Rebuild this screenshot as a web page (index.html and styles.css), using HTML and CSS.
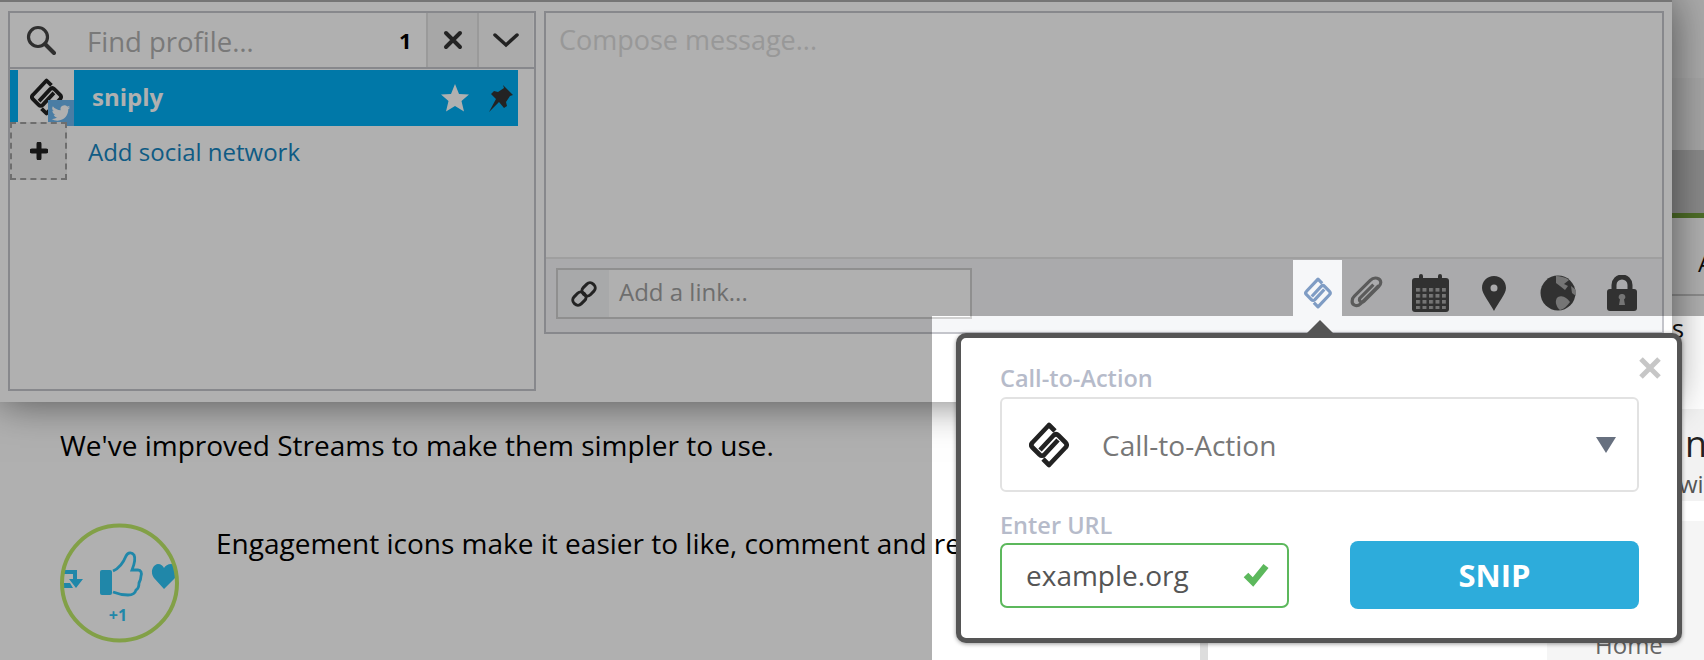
FILE: index.html
```html
<!DOCTYPE html>
<html lang="en">
<head>
    <meta charset="UTF-8">
    <meta name="viewport" content="width=device-width, initial-scale=1.0">
    <title>Compose</title>
    <link rel="stylesheet" href="styles.css">
</head>
<body>
    <svg class="defs" width="0" height="0">
        <symbol id="sniply-logo" viewBox="0 0 40 46">
            <g fill="none" stroke="currentColor" stroke-width="4.600" stroke-linejoin="round">
                <path d="M26 9 L20 3 L3.500 20.500 Q1 23 3.500 25.500 L10.500 32.500 Q13 35 15.500 32.500 L29 18"/>
                <path d="M14 37 L20 43 L36.500 25.500 Q39 23 36.500 20.500 L29.500 13.500 Q27 11 24.500 13.500 L11 28"/>
            </g>
        </symbol>
    </svg>

    <!-- page behind the composer -->
    <div class="page">
        <div class="header">
            <div class="header-top"></div>
            <div class="header-band"></div>
            <div class="header-tabs"><span>A</span></div>
        </div>
        <div class="content">
            <div class="main">
                <p class="intro">We've improved Streams to make them simpler to use.</p>
                <div class="feature">
                    <svg class="feature-icon" width="120" height="120" viewBox="0 0 120 120">
                        <defs><clipPath id="ring"><circle cx="59.5" cy="60" r="57"/></clipPath></defs>
                        <g clip-path="url(#ring)" fill="#2fc4f5">
                            <path d="M2 47 H17 V56 H23 L16 65 L9 56 H13 V51 H2 Z"/>
                            <path d="M2 60 H10 L13 65 H2 Z"/>
                            <path d="M104 66 L94 55 C90 50 92 42 98 41 C101 41 103 43 104 45 C105 43 108 41 111 41 C117 42 119 50 115 55 Z"/>
                        </g>
                        <rect x="40" y="47" width="12" height="25" rx="2" fill="#2fc4f5"/>
                        <path d="M53 48 C60 45 64 38 66 33 C68 29 72 29 74 32 C76 36 74 42 72 47 L78 47 C81 47 82 50 81 53 C81 56 80 58 79 60 C79 63 78 66 76 67 C75 71 72 72 68 72 C62 72 58 71 53 69" fill="none" stroke="#2fc4f5" stroke-width="2.8"/>
                        <text class="feature-count" x="58" y="98" text-anchor="middle">+1</text>
                        <circle cx="59.5" cy="60" r="57.5" fill="none" stroke="#bde868" stroke-width="4"/>
                    </svg>
                    <p class="feature-text">Engagement icons make it easier to like, comment and re</p>
                </div>
            </div>
            <div class="divider"></div>
            <div class="side">
                <div class="side-note">os</div>
                <div class="side-card">
                    <div class="side-title">n</div>
                    <div class="side-sub">wi</div>
                </div>
                <div class="side-links"><span>Home</span></div>
            </div>
        </div>
    </div>

    <!-- composer dropdown -->
    <div class="panel">
        <div class="profiles">
            <div class="search">
                <svg class="search-icon" width="30" height="30" viewBox="0 0 30 30">
                    <circle cx="12" cy="12" r="9.5" fill="none" stroke="#444" stroke-width="3.2"/>
                    <path d="M19 19 L28 28" stroke="#444" stroke-width="4" stroke-linecap="round"/>
                </svg>
                <span class="search-text">Find profile…</span>
                <span class="search-count">1</span>
                <div class="search-btn clear">
                    <svg width="20" height="20" viewBox="0 0 20 20"><path d="M3 3 L17 17 M17 3 L3 17" stroke="#333" stroke-width="4" stroke-linecap="round"/></svg>
                </div>
                <div class="search-btn more">
                    <svg width="26" height="16" viewBox="0 0 26 16"><path d="M2 3 L13 13 L24 3" fill="none" stroke="#333" stroke-width="3.5" stroke-linecap="round"/></svg>
                </div>
            </div>
            <div class="profile-row">
                <div class="avatar">
                    <svg class="avatar-logo"><use href="#sniply-logo"/></svg>
                    <div class="badge">
                        <svg width="20" height="20" viewBox="0 0 24 24"><path fill="#fff" d="M23 5c-.8.4-1.7.6-2.6.7.9-.6 1.6-1.4 2-2.5-.9.5-1.9.9-2.9 1.1A4.6 4.6 0 0 0 11.6 8.6 13 13 0 0 1 2.2 3.8a4.6 4.6 0 0 0 1.4 6.1c-.7 0-1.4-.2-2-.6 0 2.2 1.6 4.1 3.7 4.6-.7.2-1.4.2-2.1.1.6 1.8 2.3 3.2 4.3 3.2A9.2 9.2 0 0 1 .7 19.1 13 13 0 0 0 7.7 21.2c8.5 0 13.3-7.2 13-13.6.9-.7 1.7-1.5 2.3-2.6z"/></svg>
                    </div>
                </div>
                <span class="profile-name">sniply</span>
                <svg class="star" width="30" height="30" viewBox="0 0 30 30"><path fill="#fff" d="M15 1 L19 11 L29 11.500 L21.500 18 L24 28.500 L15 23 L6 28.500 L8.500 18 L1 11.500 L11 11 Z"/></svg>
                <svg class="pin" width="27" height="29" viewBox="0 0 27 29"><path fill="#333" d="M16 1 L26 11 L23 12 L19 18 L20 22 L17 24 L12 18 L2 28 L9 15 L4 10 L7 7 L11 8 L17 4 Z"/></svg>
            </div>
            <div class="add-row">
                <div class="add-box">
                    <svg width="18" height="18" viewBox="0 0 18 18"><path d="M9 2 V16 M2 9 H16" stroke="#222" stroke-width="5" stroke-linecap="round"/></svg>
                </div>
                <span class="add-text">Add social network</span>
            </div>
        </div>

        <div class="composer">
            <div class="message">Compose message...</div>
            <div class="toolbar">
                <div class="link-input">
                    <div class="link-icon">
                        <svg width="30" height="30" viewBox="0 0 30 30">
                            <g fill="none" stroke="#333" stroke-width="3" transform="rotate(-45 15 15)">
                                <rect x="1.500" y="10" width="14" height="10" rx="4.500"/>
                                <rect x="14.500" y="10" width="14" height="10" rx="4.500"/>
                            </g>
                        </svg>
                    </div>
                    <span class="link-text">Add a link...</span>
                </div>
                <div class="tools">
                    <div class="tool tool-active">
                        <svg class="tool-logo"><use href="#sniply-logo"/></svg>
                    </div>
                    <div class="tool">
                        <svg width="36" height="38" viewBox="0 0 34 36"><path d="M29 11 L12 28 C8 32 3 29 4 25 C4 23 5 22 6 21 L21 6 C25 2 31 4 31 8 C31 10 30 11 29 12 L15 26 C13 28 10 26 11 23 L24 10" fill="none" stroke="#858585" stroke-width="3"/></svg>
                    </div>
                    <div class="tool">
                        <svg width="37" height="38" viewBox="0 0 37 38">
                            <defs><pattern id="cal-grid" x="4" y="14" width="6.500" height="6" patternUnits="userSpaceOnUse"><rect width="4" height="3.600" fill="#aaa"/></pattern></defs>
                            <rect x="0" y="4" width="37" height="34" rx="3" fill="#484848"/>
                            <rect x="7" y="0" width="4" height="8" rx="2" fill="#484848"/>
                            <rect x="26" y="0" width="4" height="8" rx="2" fill="#484848"/>
                            <rect x="4" y="14" width="30" height="21" fill="url(#cal-grid)"/>
                        </svg>
                    </div>
                    <div class="tool">
                        <svg width="24" height="35" viewBox="0 0 24 35"><path fill="#484848" fill-rule="evenodd" d="M12 0 C19 0 24 5 24 12 C24 18 16 27 12 35 C8 27 0 18 0 12 C0 5 5 0 12 0 Z M12 8.500 A3.500 3.500 0 1 0 12 15.500 A3.500 3.500 0 1 0 12 8.500 Z"/></svg>
                    </div>
                    <div class="tool">
                        <svg width="36" height="36" viewBox="0 0 36 36">
                            <circle cx="18" cy="18" r="17.500" fill="#484848"/>
                            <path fill="#aaa" d="M16 1 C20 1 25 2 29 5 L24 9 L28 11 L25 15 L20 11 L16 8 Z"/>
                            <path fill="#aaa" d="M18 22 C23 20 27 23 30 27 C27 31 24 34 20 35 C16 32 14 25 18 22 Z"/>
                            <path fill="#aaa" d="M31 11 L36 15 L36 21 L32 18 Z"/>
                        </svg>
                    </div>
                    <div class="tool">
                        <svg width="32" height="36" viewBox="0 0 32 36">
                            <path d="M8 16 V10 A8 8 0 0 1 24 10 V16" fill="none" stroke="#484848" stroke-width="5"/>
                            <rect x="1" y="14" width="30" height="22" rx="3" fill="#484848"/>
                            <path fill="#aaa" d="M16 19 A3 3 0 0 1 18 24.500 L19 30 H13 L14 24.500 A3 3 0 0 1 16 19 Z"/>
                        </svg>
                    </div>
                </div>
            </div>
        </div>
    </div>

    <div class="overlay"></div>

    <!-- snip popup -->
    <div class="popup">
        <svg class="popup-close" width="24" height="24" viewBox="0 0 24 24"><path d="M3 3 L21 21 M21 3 L3 21" stroke="#c6c6c6" stroke-width="5"/></svg>
        <label class="popup-label">Call-to-Action</label>
        <div class="select">
            <svg class="select-logo"><use href="#sniply-logo"/></svg>
            <span class="select-text">Call-to-Action</span>
            <span class="select-arrow"></span>
        </div>
        <label class="popup-label url-label">Enter URL</label>
        <div class="url-row">
            <div class="url-input">
                <span>example.org</span>
                <svg width="27" height="24" viewBox="0 0 27 24"><path d="M3 12 L10 19 L23 3" fill="none" stroke="#5cb85c" stroke-width="6.500"/></svg>
            </div>
            <button class="snip-btn">SNIP</button>
        </div>
    </div>
</body>
</html>
```

FILE: styles.css
```css
* {
    margin: 0;
    padding: 0;
    box-sizing: border-box;
}

body {
    width: 1704px;
    height: 660px;
    overflow: hidden;
    position: relative;
    background: white;
    font-family: 'Open Sans', sans-serif;
}

.defs {
    display: block;
}

/* page behind */
.page {
    height: 660px;
    overflow: hidden;
}

.header {
    height: 296px;
    background: white;
    border-bottom: 2px solid #ccc;
}

.header-top {
    height: 150px;
    border-top: 78px solid #f6f6f6;
    background: #f0f0f0;
}

.header-band {
    height: 68px;
    background: #c8c8c8;
    border-bottom: 5px solid #72a03a;
}

.header-tabs {
    padding: 30px 0 0 1698px;
    font-size: 24px;
    line-height: 30px;
    color: #111;
}

.content {
    display: flex;
    height: 364px;
}

.main {
    width: 1200px;
    padding: 131px 0 0 60px;
}

.intro {
    font-size: 28px;
    line-height: 36px;
    color: #000;
}

.feature {
    display: flex;
    gap: 36px;
    margin-top: 60px;
}

.feature-icon {
    flex: none;
}

.feature-text {
    font-size: 28px;
    line-height: 36px;
    color: #000;
    white-space: nowrap;
    margin-top: 2px;
}

.feature-count {
    font-family: 'Open Sans', sans-serif;
    font-size: 16px;
    font-weight: 700;
    fill: #2fc4f5;
}

.divider {
    width: 8px;
    background: #ddd;
}

.side {
    flex: 1;
    display: flex;
    flex-direction: column;
    overflow: hidden;
}

.side-note {
    height: 66px;
    padding: 14px 0 0 448px;
    font-size: 26px;
    line-height: 36px;
    color: #111;
}

.side-card {
    height: 101px;
    margin-top: 52px;
    padding: 10px 0 0 477px;
    background: #f2f2f2;
}

.side-title {
    font-size: 36px;
    line-height: 50px;
    color: #222;
}

.side-sub {
    font-size: 24px;
    line-height: 30px;
    margin-left: -6px;
    white-space: nowrap;
    color: #555;
}

.side-links {
    flex: 1;
    margin-top: 20px;
    margin-left: 339px;
    padding: 109px 0 0 48px;
    background: #f5f5f5;
    font-size: 24px;
    line-height: 30px;
    color: #666;
}

/* composer dropdown */
.panel {
    position: absolute;
    top: 0;
    left: 0;
    width: 1672px;
    height: 402px;
    display: flex;
    gap: 8px;
    padding: 9px 0 0 8px;
    background: white;
    border-top: 2px solid #aaa;
    box-shadow: 0 0 40px rgba(0, 0, 0, 0.55);
}

.profiles {
    flex: none;
    width: 528px;
    height: 380px;
    border: 2px solid #c4c5cb;
}

.search {
    display: flex;
    align-items: center;
    height: 56px;
    border-bottom: 2px solid #c4c5cb;
}

.search-icon {
    margin-left: 16px;
    flex: none;
}

.search-text {
    margin-left: 31px;
    padding-top: 3px;
    width: 312px;
    font-size: 27.5px;
    color: #b0b0b0;
}

.search-count {
    width: 27px;
    font-size: 22px;
    font-weight: 700;
    color: #000;
}

.search-btn {
    height: 100%;
    display: flex;
    align-items: center;
    justify-content: center;
    border-left: 2px solid #e0e0e0;
}

.clear {
    width: 51px;
    background: #f2f2f2;
}

.more {
    width: 56px;
    background: #f8f8f8;
}

.profile-row {
    display: flex;
    align-items: center;
    position: relative;
    width: 508px;
    height: 56px;
    margin-top: 1px;
    padding-left: 8px;
    background: #00aff3;
}

.avatar {
    position: relative;
    width: 56px;
    height: 56px;
    display: flex;
    justify-content: center;
    padding-top: 8px;
    background: white;
    flex: none;
}

.avatar-logo {
    width: 33px;
    height: 38px;
    color: #222;
}

.badge {
    position: absolute;
    right: 0;
    bottom: 0;
    width: 26px;
    height: 26px;
    display: flex;
    align-items: center;
    justify-content: center;
    background: #6cb6ee;
}

.profile-name {
    margin-left: 18px;
    flex: 1;
    font-size: 24px;
    font-weight: 700;
    color: white;
    padding-bottom: 3px;
}

.star {
    margin-right: 17px;
}

.pin {
    margin-right: 4px;
}

.add-row {
    display: flex;
    align-items: center;
    margin-top: -4px;
    position: relative;
}

.add-box {
    width: 57px;
    height: 58px;
    display: flex;
    align-items: center;
    justify-content: center;
    background: #f0f0f0;
    border: 2px dashed #a0a0a0;
    flex: none;
}

.add-text {
    margin-left: 21px;
    font-size: 24px;
    color: #1685c0;
}

.composer {
    flex: none;
    width: 1120px;
    height: 323px;
    display: flex;
    flex-direction: column;
    border: 2px solid #c4c5cb;
}

.message {
    flex: 1;
    padding: 9px 0 0 13px;
    font-size: 27px;
    line-height: 36px;
    color: #dcdcdc;
}

.toolbar {
    height: 75px;
    display: flex;
    justify-content: space-between;
    padding: 1px 20px 0 10px;
    background: #f6f7f9;
    border-top: 2px solid #e6e6e6;
}

.link-input {
    display: flex;
    align-items: center;
    width: 416px;
    height: 51px;
    margin-top: 8px;
    background: white;
    border: 2px solid #d0d0d0;
}

.link-icon {
    width: 51px;
    height: 100%;
    display: flex;
    align-items: center;
    justify-content: center;
    background: #f4f5f7;
}

.link-text {
    margin-left: 10px;
    padding-bottom: 4px;
    font-size: 24px;
    color: #a0a0a0;
}

.tools {
    display: flex;
    gap: 24px;
}

.tool {
    width: 40px;
    height: 56px;
    padding-top: 10px;
    display: flex;
    align-items: center;
    justify-content: center;
}

.tool-active {
    width: 49px;
    margin-right: -20px;
}

.tool-logo {
    width: 28px;
    height: 32px;
    color: #7f9cc4;
}

/* dims everything except the highlighted corner */
.overlay {
    position: absolute;
    inset: 0;
    background: rgba(0, 0, 0, 0.31);
    clip-path: polygon(0 0, 1704px 0, 1704px 316px, 1342px 316px, 1342px 260px, 1293px 260px, 1293px 316px, 932px 316px, 932px 660px, 0 660px);
}

/* snip popup */
.popup {
    position: absolute;
    left: 956px;
    top: 333px;
    width: 726px;
    height: 310px;
    padding: 24px 38px 0 39px;
    background: white;
    border: 5px solid #555;
    border-radius: 10px;
    box-shadow: 0 1px 4px rgba(0, 0, 0, 0.4);
}

.popup::before {
    content: "";
    position: absolute;
    left: 346px;
    top: -18px;
    border-left: 13px solid transparent;
    border-right: 13px solid transparent;
    border-bottom: 13px solid #555;
}

.popup-close {
    position: absolute;
    right: 15px;
    top: 18px;
}

.popup-label {
    display: block;
    font-size: 23.5px;
    line-height: 32px;
    font-weight: 600;
    color: #b6bbca;
}

.select {
    display: flex;
    align-items: center;
    width: 639px;
    height: 95px;
    margin-top: 3px;
    padding: 0 21px 0 27px;
    border: 2px solid #e2e2e2;
    border-radius: 6px;
}

.select-logo {
    width: 40px;
    height: 46px;
    color: #222;
    flex: none;
}

.select-text {
    flex: 1;
    margin-left: 33px;
    font-size: 28px;
    color: #777;
}

.select-arrow {
    border-left: 10px solid transparent;
    border-right: 10px solid transparent;
    border-top: 16px solid #67707f;
}

.url-label {
    margin-top: 17px;
}

.url-row {
    display: flex;
    align-items: center;
    justify-content: space-between;
    width: 639px;
    margin-top: 0;
}

.url-input {
    display: flex;
    align-items: center;
    justify-content: space-between;
    width: 289px;
    height: 65px;
    padding: 0 17px 0 24px;
    border: 2px solid #5cb85c;
    border-radius: 7px;
    font-size: 28px;
    color: #555;
}

.snip-btn {
    width: 289px;
    height: 68px;
    background: #2dacdb;
    color: white;
    border: none;
    border-radius: 8px;
    font-family: 'Open Sans', sans-serif;
    font-size: 31px;
    font-weight: 700;
}
```
